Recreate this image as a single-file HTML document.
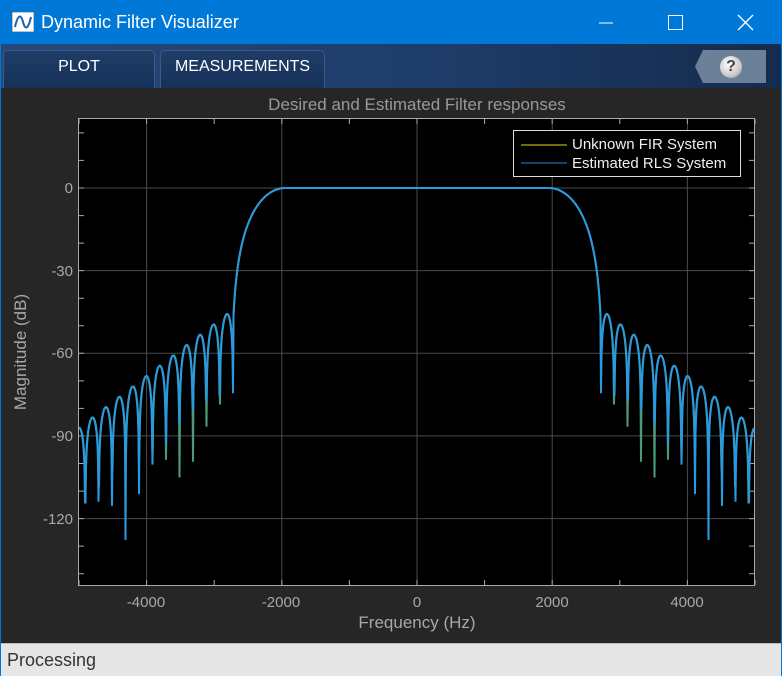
<!DOCTYPE html>
<html><head><meta charset="utf-8"><style>
*{margin:0;padding:0;box-sizing:border-box}
body{width:782px;height:676px;overflow:hidden;background:#262626;font-family:"Liberation Sans",sans-serif;position:relative}
#tb{position:absolute;left:0;top:0;width:782px;height:44px;background:#0078d7;color:#fff}
#tb .t{position:absolute;left:41px;top:12px;font-size:18px}
#tool{position:absolute;left:0;top:44px;width:782px;height:44px;background:linear-gradient(90deg,#27497a,#1d3b66 60%,#142b4d)}
.tab{position:absolute;top:6px;height:38px;background:linear-gradient(#1f3d66,#17325a);border:1px solid #3a5a85;border-bottom:none;border-radius:5px 5px 0 0;color:#fff;font-size:16px;text-align:center;line-height:32px}
#help{position:absolute;left:695px;top:50px;width:71px;height:33px;background:#6c8097;clip-path:polygon(8px 0,100% 0,100% 100%,8px 100%,0 50%)}
#help div{position:absolute;left:25px;top:6px;width:22px;height:22px;border-radius:50%;background:radial-gradient(circle at 40% 35%,#fff,#ccc 60%,#888);color:#444;font-weight:bold;font-size:16px;text-align:center;line-height:22px}
#status{position:absolute;left:0;top:643px;width:782px;height:33px;background:#e6e6e6;border-top:1px solid #bbb;font-size:18px;color:#333;padding:6px 7px}
#lb{position:absolute;left:0;top:44px;width:1px;height:632px;background:#0078d7}
#rb{position:absolute;right:0;top:44px;width:1px;height:632px;background:#0078d7}
</style></head><body>
<div id="tb"><svg style="position:absolute;left:12px;top:12px" width="22" height="20"><rect x="0" y="0" width="22" height="20" fill="#fff" stroke="#888"/><path d="M3 15 C6 2,9 2,11 10 S16 18,19 5" stroke="#1a5fb0" stroke-width="2" fill="none"/></svg><span class="t">Dynamic Filter Visualizer</span>
<svg style="position:absolute;left:598px;top:14px" width="160" height="18"><path d="M1 9H15" stroke="#fff"/><rect x="70.5" y="1.5" width="14" height="14" fill="none" stroke="#fff"/><path d="M140 1L155 16M155 1L140 16" stroke="#fff" stroke-width="1.3"/></svg></div>
<div id="tool"><div class="tab" style="left:3px;width:152px">PLOT</div><div class="tab" style="left:160px;width:165px">MEASUREMENTS</div></div>
<div id="help"><div>?</div></div>
<svg style="position:absolute;left:0;top:88px" width="782" height="555" id="p">
<text x="417" y="22" fill="#999" font-size="17" text-anchor="middle" font-family="Liberation Sans">Desired and Estimated Filter responses</text>
<g transform="translate(0,-88)">
<rect x="78.5" y="118.5" width="676" height="467" fill="#000" stroke="#aaa"/>
<g id="grid" stroke="#444" stroke-width="1"></g>
<g id="curves" fill="none"></g>
<g font-size="15" fill="#a8a8a8" font-family="Liberation Sans">
<text x="73" y="193" text-anchor="end">0</text><text x="73" y="276" text-anchor="end">-30</text><text x="73" y="358" text-anchor="end">-60</text><text x="73" y="441" text-anchor="end">-90</text><text x="73" y="524" text-anchor="end">-120</text>
<text x="146" y="607" text-anchor="middle">-4000</text><text x="281" y="607" text-anchor="middle">-2000</text><text x="417" y="607" text-anchor="middle">0</text><text x="552" y="607" text-anchor="middle">2000</text><text x="687" y="607" text-anchor="middle">4000</text>
<text x="417" y="628" text-anchor="middle" font-size="17">Frequency (Hz)</text>
<text transform="translate(26,352) rotate(-90)" text-anchor="middle" font-size="17">Magnitude (dB)</text>
</g>
<rect x="513.5" y="130.5" width="227" height="46" fill="#000" stroke="#ddd"/>
<path d="M521 145H567" stroke="#dd0"/><path d="M521 163H567" stroke="#1b8ed0"/>
<text x="572" y="149" fill="#eee" font-size="15" font-family="Liberation Sans">Unknown FIR System</text>
<text x="572" y="168" fill="#eee" font-size="15" font-family="Liberation Sans">Estimated RLS System</text>
</g></svg>
<div id="status">Processing</div>
<div id="lb"></div><div id="rb"></div>
<script>
function X(f){return 417+f*0.0676}function Y(d){return 188-d*2.755}
var g=document.getElementById('grid'),s='';
[-4000,-2000,0,2000,4000].forEach(function(f){s+='M'+X(f).toFixed(1)+' 119V585';});
[0,-30,-60,-90,-120].forEach(function(d){s+='M79 '+Y(d).toFixed(1)+'H754';});
var t='';for(var f=-5000;f<=5000;f+=1000){var x=X(f).toFixed(1);t+='M'+x+' 119v5M'+x+' 585v-5';}
for(var d=20;d>=-140;d-=10){var y=Y(d).toFixed(1);t+='M79 '+y+'h5M754 '+y+'h-5';}
g.innerHTML='<path d="'+s+'" stroke="#4a4a4a"/><path d="'+t+'" stroke="#aaa"/>';
function resp(f,off){var a=Math.abs(f);if(a<1950)return 0;
if(a<2720){var m=0.5*(1+Math.cos(Math.PI*(a-1950)/800));return Math.max(20*Math.log10(Math.max(m,1e-6)),-75);}
var env=-44-(a-2720)/2280*43;var sv=Math.abs(Math.sin(Math.PI*(a-2720+off)/199));
return Math.max(env+20*Math.log10(Math.max(sv,1e-4)),-142);}
function path(off){var p='';for(var x=79;x<=754;x+=0.5){var f=(x-417)/0.0676;var y=Y(resp(f,off));p+=(p?'L':'M')+x+' '+y.toFixed(1);}return p;}
document.getElementById('curves').innerHTML='<path d="'+path(3)+'" stroke="#4d9a78" stroke-width="2"/><path d="'+path(0)+'" stroke="#2a9ae0" stroke-width="2"/>';
</script>
</body></html>
